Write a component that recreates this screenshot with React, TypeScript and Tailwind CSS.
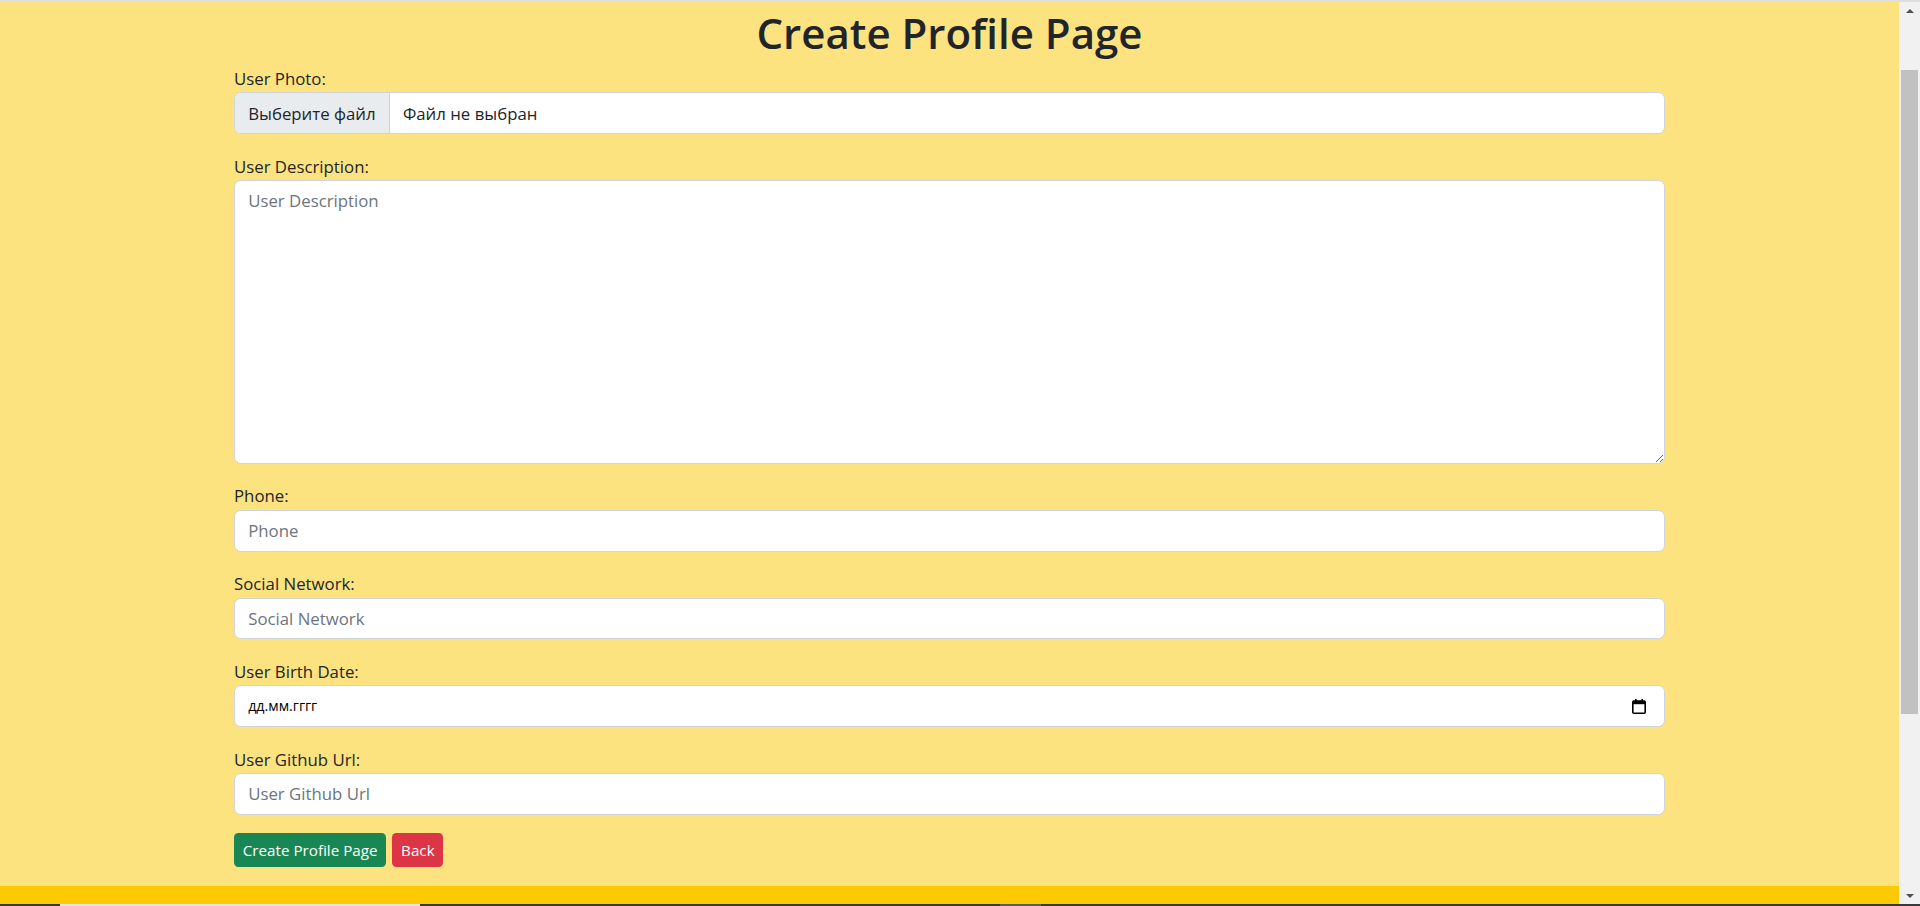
import React from "react";

const FONT = "font-['Open_Sans','Noto_Sans',sans-serif]";

function Field({ label, placeholder, last }: { label: string; placeholder: string; last?: boolean }) {
  return (
    <div className={`flex flex-col ${last ? "mb-[18.5px]" : "mb-[19.5px]"}`}>
      <label className="text-[16.8px] leading-[26.4px] text-[#212529]">{label}</label>
      <input
        type="text"
        placeholder={placeholder}
        className="h-[41.8px] w-full rounded-[6.6px] border border-[#ced4da] bg-white px-[13.2px] text-[16.8px] text-[#212529] outline-none placeholder:text-[#6c757d]"
      />
    </div>
  );
}

function CalendarIcon() {
  return (
    <svg width="14" height="15" viewBox="0 0 14 15" fill="none">
      <rect x="3" y="0" width="1.6" height="3" fill="#000" />
      <rect x="9.4" y="0" width="1.6" height="3" fill="#000" />
      <rect x="0.8" y="2" width="12.4" height="12.2" rx="1" stroke="#000" strokeWidth="1.6" fill="none" />
      <rect x="0.8" y="2" width="12.4" height="3.2" fill="#000" />
    </svg>
  );
}

function Scrollbar() {
  return (
    <div className="flex w-[21px] shrink-0 flex-col bg-[#f1f1f1]">
      <div className="flex h-[17px] items-center justify-center">
        <div className="h-0 w-0 border-x-[4px] border-b-[4px] border-x-transparent border-b-[#505050]" />
      </div>
      <div className="mx-[2px] mt-[51px] h-[644px] bg-[#c1c1c1]" />
      <div className="flex-1" />
      <div className="flex h-[17px] items-center justify-center">
        <div className="h-0 w-0 border-x-[4px] border-t-[4px] border-x-transparent border-t-[#505050]" />
      </div>
    </div>
  );
}

export default function App() {
  return (
    <div className={`flex h-[906px] w-full flex-col overflow-hidden ${FONT}`}>
      <div className="h-[2px] bg-[#dedede]" />
      <div className="flex min-h-0 flex-1">
        <main className="flex flex-1 flex-col bg-[#fde380]">
          <div className="mx-auto w-[1431px]">
            <h1 className="mb-[6px] mt-[5px] text-center text-[42px] font-semibold leading-[52.8px] text-[#212529]">
              Create Profile Page
            </h1>

            <div className="mb-[19.5px] flex flex-col">
              <label className="text-[16.8px] leading-[26.4px] text-[#212529]">User Photo:</label>
              <div className="flex h-[41.8px] w-full overflow-hidden rounded-[6.6px] border border-[#ced4da] bg-white text-[16.8px] text-[#212529]">
                <div className="flex items-center border-r border-[#ced4da] bg-[#e9ecef] px-[13.2px]">
                  Выберите файл
                </div>
                <div className="flex items-center px-[13.2px]">Файл не выбран</div>
              </div>
            </div>

            <div className="mb-[19.5px] flex flex-col">
              <label className="text-[16.8px] leading-[26.4px] text-[#212529]">User Description:</label>
              <textarea
                placeholder="User Description"
                className="h-[284px] w-full rounded-[6.6px] border border-[#ced4da] bg-white px-[13.2px] py-[6.6px] text-[16.8px] leading-[26.4px] text-[#212529] outline-none placeholder:text-[#6c757d]"
              />
            </div>

            <Field label="Phone:" placeholder="Phone" />
            <Field label="Social Network:" placeholder="Social Network" />

            <div className="mb-[19.5px] flex flex-col">
              <label className="text-[16.8px] leading-[26.4px] text-[#212529]">User Birth Date:</label>
              <div className="flex h-[41.8px] w-full items-center justify-between rounded-[6.6px] border border-[#ced4da] bg-white pl-[13.2px] pr-[18px]">
                <span className="text-[14.2px] font-normal text-black">дд.мм.гггг</span>
                <CalendarIcon />
              </div>
            </div>

            <Field label="User Github Url:" placeholder="User Github Url" last />

            <div className="flex gap-[6px]">
              <button className="h-[34px] rounded-[4.4px] bg-[#198754] px-[8.8px] text-[15.2px] text-white">
                Create Profile Page
              </button>
              <button className="h-[34px] rounded-[4.4px] bg-[#dc3545] px-[8.8px] text-[15.2px] text-white">
                Back
              </button>
            </div>
          </div>
          <div className="mt-auto h-[18px] bg-[#fcc902]" />
        </main>
        <Scrollbar />
      </div>
      <div className="flex h-[2px] bg-[#353a3d]">
        <div className="ml-[60px] w-[360px] bg-[#e4e4e4]" />
        <div className="ml-[580px] w-[41px] bg-[#5c5c5c]" />
      </div>
    </div>
  );
}
